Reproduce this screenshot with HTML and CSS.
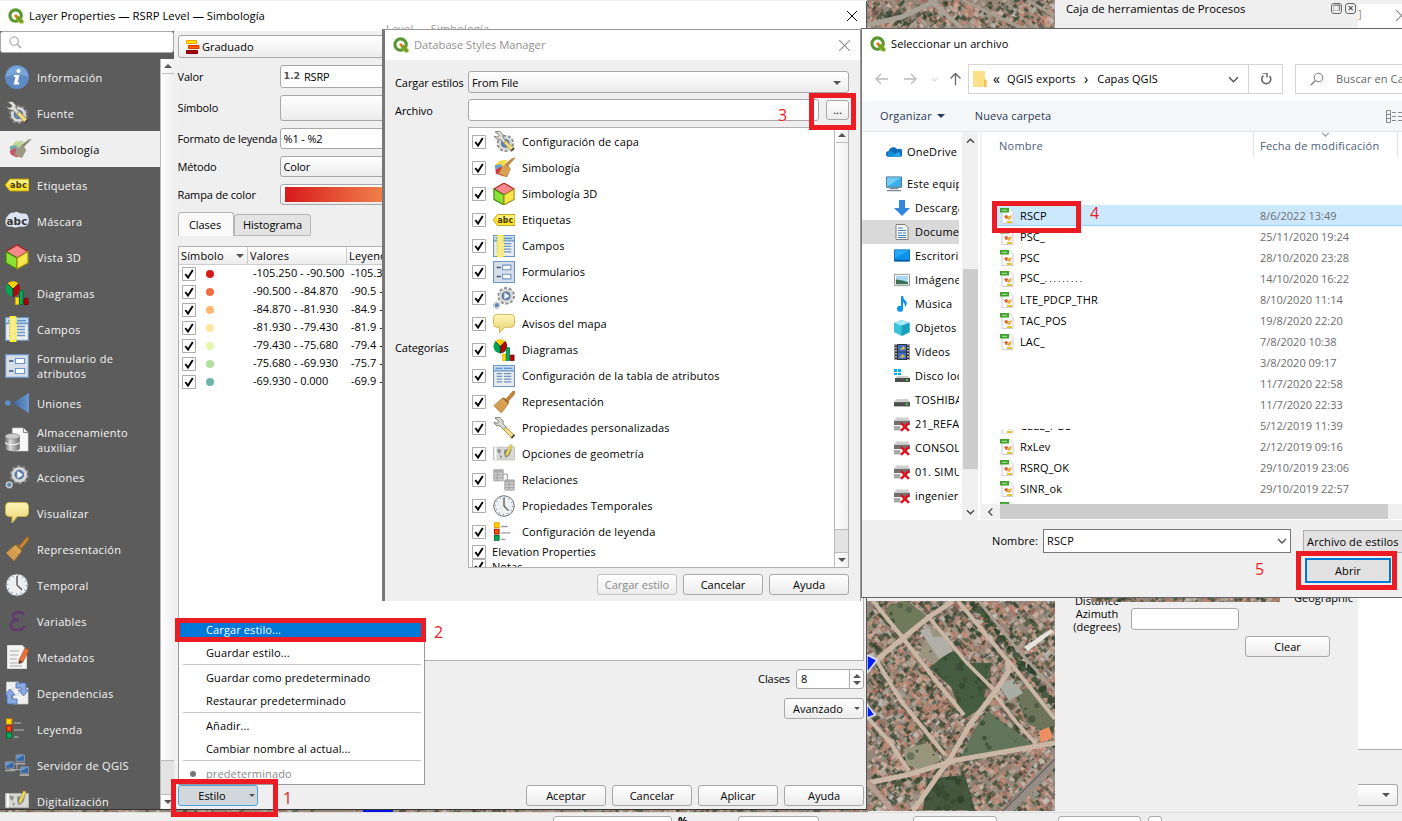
FILE: index.html
```html
<!DOCTYPE html>
<html lang="es">
<head>
<meta charset="utf-8">
<title>Layer Properties — RSRP Level — Simbología</title>
<link rel="stylesheet" href="styles.css">
</head>
<body>
<svg class="defs" width="0" height="0">
<defs>
<linearGradient id="g-blue" x1="0" y1="0" x2="1" y2="0"><stop offset="0" stop-color="#3a6096"/><stop offset="1" stop-color="#6b9ad0"/></linearGradient>
<linearGradient id="g-cyl" x1="0" y1="0" x2="1" y2="0"><stop offset="0" stop-color="#666"/><stop offset=".35" stop-color="#ddd"/><stop offset="1" stop-color="#6a6a6a"/></linearGradient>
<linearGradient id="g-yel" x1="0" y1="0" x2="0" y2="1"><stop offset="0" stop-color="#fff6b8"/><stop offset="1" stop-color="#e8d36e"/></linearGradient>
</defs>
<symbol id="qgis" viewBox="0 0 16 16"><circle cx="7.6" cy="7.6" r="5.7" fill="none" stroke="#589632" stroke-width="3.1"/><path d="M8 8l3.2 0 4.3 4.6v3h-3.3l-4.2-4.4z" fill="#93b023"/><path d="M8.6 8.4l5.8 6" stroke="#5f9a35" stroke-width="1.6"/><circle cx="8" cy="8" r="1.7" fill="#ee7913"/></symbol>
<symbol id="info" viewBox="0 0 24 24"><circle cx="12" cy="12" r="12" fill="#5b8ac4"/><path d="M1 12a11 11 0 0 1 22 0q-11-5-22 0" fill="#7ba4d8"/><circle cx="13.5" cy="6" r="2" fill="#fff"/><path d="M9 10h5.500l-2 7.500h2l-.5 2h-5.500l2-7.500H8.500z" fill="#fff"/></symbol>
<symbol id="gear" viewBox="0 0 20 20"><circle cx="10" cy="10" r="8.600" fill="none" stroke="#8a8a8a" stroke-width="2.600" stroke-dasharray="3.500 1.900"/><circle cx="10" cy="10" r="6.500" fill="#6f9bd1" stroke="#d6d6d6" stroke-width="3"/><circle cx="10" cy="10" r="4.300" fill="#5b8ac4" stroke="#555" stroke-width=".6"/></symbol>
<symbol id="wrench" viewBox="0 0 24 24"><path d="M2 1l5-.8 4 4v3.200l4 4.500-3 2.400L8 10 3.500 9 .8 6l4.200.8 1.800-1.800z" fill="#dcdcd4" stroke="#66685e" stroke-width=".9"/><path d="M11.500 13.500l3-2.500 8.500 8.500-2.800 3.200z" fill="#f1dc83" stroke="#9b8940" stroke-width=".9"/><path d="M20 23l3.500-3.500" stroke="#444" stroke-width="2"/></symbol>
<symbol id="source" viewBox="0 0 24 24"><use href="#gear" x="4" y="4" width="19" height="19"/><use href="#wrench" x="0" y="0" width="24" height="23"/></symbol>
<symbol id="symb" viewBox="0 0 24 24"><path d="M1 10l6-6 9-1-4 7z" fill="#f4dc42"/><path d="M2 9l7-1 3 6-9 2z" fill="#6f9bd1"/><path d="M3 14l6-3 4 9-2 1-8-3z" fill="#da3038"/><path d="M10 11l5-3 4 5-4 9-9-4z" fill="#d9a055" stroke="#a47433" stroke-width=".6"/><path d="M16 10L24 1l-3.500 1-7 6z" fill="#c88a3d" stroke="#9a6727" stroke-width=".6"/></symbol>
<symbol id="symbsel" viewBox="0 0 26 24"><path d="M1 12l7-8 9-1-4 7z" fill="#bdd894"/><path d="M2 9l7-1 3 6-9 2z" fill="#74a5aa"/><path d="M2 14l6-3 4 9-3 1-6-3z" fill="#c75465"/><path d="M10 11l6-3 4 5-5 9-8-4z" fill="#9b9b85"/><path d="M17 10L26 1l-4 1-8 6z" fill="#8e8c74"/></symbol>
<symbol id="brush" viewBox="0 0 24 24"><path d="M14 9l8-9h2l-1 4-7 8z" fill="#c98432" stroke="#925d1d" stroke-width=".6"/><path d="M1 16l9-8 3 0 4 4-1 3-7 9z" fill="#dba354" stroke="#9b6a2a" stroke-width=".7"/><path d="M3 16l7 6M5 14l6 6M7 12l6 6" stroke="#b57e36" stroke-width=".7"/><path d="M11 8l6 5" stroke="#8f6329" stroke-width="1.500"/></symbol>
<symbol id="label" viewBox="0 0 24 24"><path d="M0 12l5-6h19v12H5z" fill="#fbe12e" stroke="#b99d10" stroke-width=".9"/><path d="M5 7h18v4H3z" fill="#fff083"/><text x="5" y="15.200" class="abc" font-size="8.800" fill="#443c08" textLength="17" lengthAdjust="spacingAndGlyphs">abc</text></symbol>
<symbol id="mask" viewBox="0 0 26 24"><path d="M4 5q3-3 6-2 2-2 5 0l3 1q6-1 7 3 2 6-1 10-4 2-8 1-5 2-9 0-5 1-6-2-2-6 3-11z" fill="#dbe4f3"/><text x="1.500" y="16" class="abc" font-size="12" fill="#333" textLength="23" lengthAdjust="spacingAndGlyphs">abc</text></symbol>
<symbol id="cube" viewBox="0 0 24 24"><g stroke-linejoin="round" stroke-width="1.200"><path d="M12 0l11 6.500L12 13 1 6.500z" fill="#f5898b" stroke="#b01a1f"/><path d="M1 6.500L12 13v11L1 18z" fill="#8be234" stroke="#3d8411"/><path d="M23 6.500L12 13v11l11-6z" fill="#f7e64c" stroke="#a08f14"/></g></symbol>
<symbol id="diag" viewBox="0 0 24 24"><circle cx="8" cy="8" r="7.500" fill="#00a651"/><path d="M8 8L2.500 2.500a8 8 0 0 1 11 0z" fill="#fc0"/><path d="M8 8l5.500-5.500a8 8 0 0 1-5.500 13z" fill="#b00a0a"/><path d="M8 8v8M8 8L2.500 2.500M8 8l5.500-5.500" stroke="#222" stroke-width=".8"/><g stroke-width=".8"><path d="M10.500 16.500h3.500v7h-3.500z" fill="#fd0" stroke="#d9a400"/><path d="M14.500 9.500h3.500v14h-3.500z" fill="#00b050" stroke="#064"/><path d="M19 17.500h4v6h-4z" fill="#b00" stroke="#600"/></g></symbol>
<symbol id="table" viewBox="0 0 24 24"><path d="M.6.6h22.800v22.800H.6z" fill="#ececec" stroke="#6a96c8" stroke-width="1.200"/><path d="M1.500 1.500h21v5h-21z" fill="#b6d5f1"/><path d="M1 6.500h22M3 3.700h7M12 3.700h9M4 9.500h6M12 9.500h8M4 12.500h6M12 12.500h8M4 15.500h6M12 15.500h8M4 18.500h6M12 18.500h8" stroke="#6a96c8" stroke-width="1.400"/></symbol>
<symbol id="fields" viewBox="0 0 24 24"><use href="#table" width="24" height="24"/><path d="M5.500 0h5v24h-5z" fill="#f3e9a9" stroke="#fcf03c" stroke-width="1.800"/></symbol>
<symbol id="form" viewBox="0 0 24 24"><path d="M.6.6h22.800v22.800H.6z" fill="#d7dee8" stroke="#6a96c8" stroke-width="1.200"/><path d="M10.500 4.500h9v5h-9zM10.500 14.500h9v5h-9z" fill="#fff" stroke="#6a96c8" stroke-width="1.200"/><path d="M4 7h4.500M4 17h4.500" stroke="#45566e" stroke-width="1.600"/></symbol>
<symbol id="join" viewBox="0 0 26 24"><path d="M8 12L26 1v22z" fill="url(#g-blue)"/><circle cx="3" cy="12" r="3" fill="#5f8ec8"/></symbol>
<symbol id="aux" viewBox="0 0 26 26"><path d="M8 0h12l5 5v20H8z" fill="#f8f8f8" stroke="#ccc" stroke-width=".6"/><path d="M20 0v5h5" fill="none" stroke="#777"/><path d="M0 9v13q0 3 8 3t8-3V9z" fill="url(#g-cyl)"/><ellipse cx="8" cy="9" rx="8" ry="3" fill="#ccc" stroke="#777" stroke-width=".6"/><path d="M0 15.500q2 2.500 8 2.500t8-2.500" fill="none" stroke="#eee" stroke-width="1.300"/></symbol>
<symbol id="act" viewBox="0 0 26 26"><use href="#gear" x="5" y="0" width="21" height="21"/><path d="M13.500 6.500l6 4-6 4z" fill="#fff"/><use href="#gear" x="0" y="17" width="9" height="9"/></symbol>
<symbol id="tip" viewBox="0 0 24 24"><path d="M4 1.500h16q3.500 0 3.500 4v6q0 4-3.500 4h-7.500L7 22v-6.500H4q-3.500 0-3.500-4v-6q0-4 3.500-4z" fill="url(#g-yel)" stroke="#c9b251"/></symbol>
<symbol id="clock" viewBox="0 0 24 24"><circle cx="12" cy="12" r="11.200" fill="#eeeff1" stroke="#666" stroke-width="1"/><circle cx="12" cy="12" r="9.300" fill="none" stroke="#6f92bd" stroke-width="1.500" stroke-dasharray="1 3.870"/><path d="M12 3v9l5 5" fill="none" stroke="#555" stroke-width="1.400"/></symbol>
<symbol id="eps" viewBox="0 0 24 24"><path d="M18.500 6.500q-.5-3.500-5-3.500t-5.500 4q0 4 6 4-8 0-8 5t7 5q5.500 0 6.500-4" fill="none" stroke="#62396e" stroke-width="2.600"/></symbol>
<symbol id="meta" viewBox="0 0 24 24"><path d="M2.500.5h15l4 5v18h-19z" fill="#f3f3f3" stroke="#ddd"/><path d="M5 6h9M5 10h8M5 14h7M5 18h12M5 21h12" stroke="#c3c3c3" stroke-width="1.300"/><path d="M14 15l6-12 4 2-6 12-4 1.500z" fill="#e8703a" stroke="#b44b1b" stroke-width=".6"/><path d="M13.800 18.500l.4-3.500 3.500 2z" fill="#444"/></symbol>
<symbol id="dep" viewBox="0 0 24 24"><path d="M1.500 1h12v13h-12zM8 7h15v16H8z" fill="#f0f0f0" stroke="#ccc" stroke-width=".7"/><path d="M5 8l5 6H7v4h5v5H2v-9H-.2z" fill="#8aa9e0" stroke="#456db4" stroke-width=".8"/><path d="M11 2h10v7h2.500L18.500 15l-5-6h3V7h-5.500z" fill="#8aa9e0" stroke="#456db4" stroke-width=".8"/></symbol>
<symbol id="leg" viewBox="0 0 24 24"><g stroke-width="1.200"><path d="M1.600 2h5v5h-5z" fill="#ffe100" stroke="#f39c00"/><path d="M1.600 9h5v5h-5z" fill="#ff5a00" stroke="#b01500"/><path d="M1.600 16h5v5h-5z" fill="#00b45a" stroke="#067035"/></g><path d="M9 6h7M9 13h10M9 20h4.500" stroke="#9a9a9a" stroke-width="1.500"/></symbol>
<symbol id="srv" viewBox="0 0 26 24"><path d="M13 10v6M5 17h15" stroke="#bbb"/><g fill="#3465a4" stroke="#8f99a3"><path d="M12 1h9v7h-9zM.6 8.500h9v7h-9zM17 14h8.500v7H17z"/></g><path d="M11 10.500h11M0 18h11M16 23h10" stroke="#aaa" stroke-width="1.800"/><path d="M12.500 1.500h8l-8 4zM1 9h8l-8 4zM17.500 14.500h7.500l-7.500 4z" fill="#6f9bd1"/></symbol>
<symbol id="digi" viewBox="0 0 26 24"><path d="M.5 4h25v15H.5z" fill="#d8d8d6" stroke="#bbb"/><path d="M3 4v15" stroke="#fff" stroke-width="2"/><path d="M5 6l5 1-2 5-3-3zM13 7l9-1-2 7-5 4-2-5zM8 13l3 2-2 3z" fill="#8f918c"/><path d="M15 12L20 1l3 1-5 11-3 2z" fill="#f0df5b" stroke="#9b8b2b" stroke-width=".6"/></symbol>
<symbol id="rel" viewBox="0 0 26 26"><path d="M11 6h6v8" fill="none" stroke="#888"/><g fill="#ccc" stroke="#999"><path d="M1 1h11v13H1zM14 13h11v12H14z"/></g><path d="M1 2.500h11M14 14.500h11" stroke="#aaa" stroke-width="3"/><path d="M1 7h11M1 10.500h11M5 4v10M14 18.500h11M14 22h11M19 16v9" stroke="#888" stroke-width=".7"/></symbol>
<symbol id="grad" viewBox="0 0 14 14"><path d="M.5.500h10v3H.500z" fill="#ffe100" stroke="#f2a100"/><path d="M2.500 5.500h10.500v3H2.500z" fill="#ff5a00" stroke="#d33a00"/><path d="M.5 10.500h11v3H.500z" fill="#b30000" stroke="#700"/></symbol>
<symbol id="mag" viewBox="0 0 14 14"><circle cx="5.500" cy="5.500" r="4.500" fill="none" stroke="#8d8d8d"/><path d="M9 9l4 4" stroke="#8d8d8d" stroke-width="1.300"/></symbol>
<symbol id="mag2" viewBox="0 0 14 14"><circle cx="8.500" cy="5.500" r="4.300" fill="none" stroke="#777"/><path d="M5.500 8.500L1 13" stroke="#777" stroke-width="1.200"/></symbol>
<symbol id="x" viewBox="0 0 10 10"><path d="M0 0l10 10M10 0L0 10" stroke="currentColor" fill="none"/></symbol>
<symbol id="v" viewBox="0 0 10 6"><path d="M1 1l4 4 4-4" stroke="currentColor" stroke-width="1.400" fill="none"/></symbol>
<symbol id="arr" viewBox="0 0 13 12"><path d="M13 6H1M6 1L1 6l5 5" stroke="currentColor" stroke-width="1.300" fill="none"/></symbol>
<symbol id="reload" viewBox="0 0 12 12"><path d="M9.500 3A4.500 4.500 0 1 1 3.500 2.600" fill="none" stroke="#666" stroke-width="1.600"/><path d="M2.500 0h4.500v4.500" fill="none" stroke="#666" stroke-width="1.400"/></symbol>
<symbol id="folder" viewBox="0 0 14 16"><path d="M0 0h12v8l1.500 1.500V16H0z" fill="#ffe08a"/><path d="M12 8l1.500 1.500V16H11V9z" fill="#f0c350"/></symbol>
<symbol id="cloud" viewBox="0 0 17 12"><path d="M3 11a3 3 0 0 1 0-6A5 5 0 0 1 12 3a4 4 0 0 1 4 8z" fill="#0f6cbd"/><path d="M3 11a3.500 3.500 0 0 1 2-6l10 6z" fill="#1490df"/><path d="M6 11l7-5a4 4 0 0 1 2 5z" fill="#28a8ea"/></symbol>
<symbol id="pc" viewBox="0 0 17 16"><path d="M.5.500h16v11H.500z" fill="#3dafee" stroke="#4e6f86"/><path d="M1 1h15L1 11z" fill="#73cdf6"/><path d="M4 13h9M1 15h15" stroke="#7a8b96" stroke-width="1.300"/></symbol>
<symbol id="down" viewBox="0 0 16 16"><path d="M5 0h6v8h5l-8 8-8-8h5z" fill="#3187de"/></symbol>
<symbol id="doc" viewBox="0 0 14 16"><path d="M1 .5h9l3 3v12H1z" fill="#f8f8f8" stroke="#818181"/><path d="M3 4h5M3 6.500h8M3 9h4M8 9h3M3 11.500h8M3 13.500h8" stroke="#3d83bd" stroke-width="1.200"/></symbol>
<symbol id="desk" viewBox="0 0 17 14"><path d="M.5.500h16v12H.500z" fill="#0d94ea" stroke="#086ab2"/><path d="M1 11.500h15" stroke="#064f86"/><path d="M1 1h15L1 9z" fill="#28a8f5"/></symbol>
<symbol id="img" viewBox="0 0 17 13"><path d="M.5.500h16v12H.500z" fill="#fff" stroke="#929292"/><path d="M2 2h13v9H2z" fill="#a9d6f2"/><path d="M2 6q5 0 13 3v2H2z" fill="#3c7054"/></symbol>
<symbol id="mus" viewBox="0 0 12 16"><path d="M5 0h2q0 3 3 5 2 3-1 6 0-4-2-5v7a3 3 0 1 1-2-3z" fill="#0b93ec"/></symbol>
<symbol id="obj" viewBox="0 0 17 17"><path d="M0 3l8-3 8.500 3v10l-8 4L0 13z" fill="#3bc2d8"/><path d="M0 3l8-3 8.500 3L8 6z" fill="#a6e9f2"/><path d="M8 6l8.500-3v10L8 17z" fill="#1a9fbe"/></symbol>
<symbol id="vid" viewBox="0 0 15 16"><path d="M0 0h15v16H0z" fill="#333"/><path d="M1.500 0v16M13.500 0v16" stroke="#eee" stroke-width="1.300" stroke-dasharray="1.500 1.500"/><path d="M3.500 1h8v6.500h-8zM3.500 8.500h8V15h-8z" fill="#3b6fd0"/><path d="M5 6l4-4 2 3zM5 14l3-4 3 3z" fill="#e7b82d"/></symbol>
<symbol id="hdd" viewBox="0 0 15 14"><path d="M2 6h11l2 3H0z" fill="#cfcfcf"/><path d="M0 9h15v4H0z" fill="#4c4c4c"/><path d="M11 11h2" stroke="#4fe04f" stroke-width="1.500"/></symbol>
<symbol id="win" viewBox="0 0 16 14"><path d="M0 0h3v3H0zM4 0h3v3H4zM0 4h3v2H0zM4 4h3v2H4z" fill="#00adef"/><path d="M3 7h11l2 2H1z" fill="#cfcfcf"/><path d="M1 9h15v4H1z" fill="#4c4c4c"/><path d="M12 11h2" stroke="#4fe04f" stroke-width="1.500"/></symbol>
<symbol id="net" viewBox="0 0 15 14"><path d="M2 1h11l2 3H0z" fill="#cfcfcf"/><path d="M0 4h15v4H0z" fill="#707070"/><path d="M0 9h6v4H0z" fill="#a5a5a5"/><path d="M6.500 6l7.500 7.500M14 6l-7.500 7.500" stroke="#e0141e" stroke-width="2.400"/></symbol>
<symbol id="qml" viewBox="0 0 14 16"><path d="M2 .500h8l3 3v12H2z" fill="#fafafa" stroke="#cfcfcf"/><path d="M0 0h9v4.500H0z" fill="#3ea52b"/><path d="M2 2.300h5" stroke="#b9e0b0"/><path d="M4 8l3-1 2 3-3 1z" fill="#da5b3c"/><path d="M7 9l5-2-2 5-3-1z" fill="#e8af3e"/><path d="M7 13h5v2H7z" fill="#e0c52f"/></symbol>
<symbol id="tick" viewBox="0 0 14 14"><path d="M.5.500h13v13H.500z" fill="#fff" stroke="#adadad"/><path d="M3.300 7l2.700 3.500 4.800-7.500" fill="none" stroke="#000" stroke-width="1.900"/></symbol>
</svg>

<!-- QGIS main window behind the dialogs -->
<canvas class="map map-top" id="map-top" width="188" height="28"></canvas>
<canvas class="map map-bottom" id="map-bottom" width="188" height="210"></canvas>
<canvas class="map map-strip" id="map-strip" width="868" height="3"></canvas>
<canvas class="map map-hair" id="map-hair" width="189" height="10"></canvas>
<section class="dock-top"><span>Caja de herramientas de Procesos</span><i class="mini">❐</i><i class="mini">✕</i></section>
<div class="corner">] <svg width="11" height="11"><use href="#x"/></svg></div>
<section class="dock-bottom">
  <div class="az-row"><label>Distance<br>Azimuth<br>(degrees)</label><div class="input az"></div><span class="geo">Geographic</span></div>
  <div class="btn clear">Clear</div>
</section>
<section class="far">
  <div class="far-white"></div>
  <div class="far-combo"><i class="caret"></i></div>
</section>
<footer class="status"><i class="s1"></i><b>%</b><i class="s2"></i><i class="s3"></i><i class="s4"></i><i class="s5"></i></footer>

<!-- Layer properties -->
<main class="win props">
  <header class="title"><svg width="16" height="16"><use href="#qgis"/></svg><span>Layer Properties — RSRP Level — Simbología</span><svg class="close" width="10" height="10"><use href="#x"/></svg></header>
  <div class="props-body">
    <div class="side">
      <div class="search"><svg width="13" height="13"><use href="#mag"/></svg></div>
      <div class="side-main">
        <ul class="nav">
          <li><svg><use href="#info"/></svg>Información</li>
          <li><svg><use href="#source"/></svg>Fuente</li>
          <li class="sel"><svg><use href="#symbsel"/></svg>Simbología</li>
          <li><svg><use href="#label"/></svg>Etiquetas</li>
          <li><svg><use href="#mask"/></svg>Máscara</li>
          <li><svg><use href="#cube"/></svg>Vista 3D</li>
          <li><svg><use href="#diag"/></svg>Diagramas</li>
          <li><svg><use href="#fields"/></svg>Campos</li>
          <li class="two"><svg><use href="#form"/></svg><span>Formulario de<br>atributos</span></li>
          <li><svg><use href="#join"/></svg>Uniones</li>
          <li class="two"><svg><use href="#aux"/></svg><span>Almacenamiento<br>auxiliar</span></li>
          <li><svg><use href="#act"/></svg>Acciones</li>
          <li><svg><use href="#tip"/></svg>Visualizar</li>
          <li><svg><use href="#brush"/></svg>Representación</li>
          <li><svg><use href="#clock"/></svg>Temporal</li>
          <li><svg><use href="#eps"/></svg>Variables</li>
          <li><svg><use href="#meta"/></svg>Metadatos</li>
          <li><svg><use href="#dep"/></svg>Dependencias</li>
          <li><svg><use href="#leg"/></svg>Leyenda</li>
          <li><svg><use href="#srv"/></svg>Servidor de QGIS</li>
          <li><svg><use href="#digi"/></svg>Digitalización</li>
        </ul>
        <div class="vbar"><i class="up"></i><b></b><i class="dn"></i></div>
      </div>
    </div>
    <div class="grip"></div>
    <div class="content">
      <div class="combo graduado"><svg width="14" height="14"><use href="#grad"/></svg>Graduado</div>
      <div class="frow r1"><span>Valor</span><div class="input"><b>1.2</b>RSRP</div></div>
      <div class="frow r2"><span>Símbolo</span><div class="combo"></div></div>
      <div class="frow r3"><span>Formato de leyenda</span><div class="input">%1 - %2</div></div>
      <div class="frow r4"><span>Método</span><div class="combo">Color</div></div>
      <div class="frow r5"><span>Rampa de color</span><div class="combo"><i class="ramp"></i></div></div>
      <div class="tabs"><div class="tab on">Clases</div><div class="tab">Histograma</div></div>
      <div class="classes">
        <div class="crow head"><span>Símbolo<i class="caret"></i></span><span>Valores</span><span>Leyenda</span></div>
        <div class="crow"><span><svg><use href="#tick"/></svg><i class="dot d1"></i></span><span>-105.250 - -90.500</span><span>-105.3 - -90.5</span></div>
        <div class="crow"><span><svg><use href="#tick"/></svg><i class="dot d2"></i></span><span>-90.500 - -84.870</span><span>-90.5 - -84.9</span></div>
        <div class="crow"><span><svg><use href="#tick"/></svg><i class="dot d3"></i></span><span>-84.870 - -81.930</span><span>-84.9 - -81.9</span></div>
        <div class="crow"><span><svg><use href="#tick"/></svg><i class="dot d4"></i></span><span>-81.930 - -79.430</span><span>-81.9 - -79.4</span></div>
        <div class="crow"><span><svg><use href="#tick"/></svg><i class="dot d5"></i></span><span>-79.430 - -75.680</span><span>-79.4 - -75.7</span></div>
        <div class="crow"><span><svg><use href="#tick"/></svg><i class="dot d6"></i></span><span>-75.680 - -69.930</span><span>-75.7 - -69.9</span></div>
        <div class="crow"><span><svg><use href="#tick"/></svg><i class="dot d7"></i></span><span>-69.930 - 0.000</span><span>-69.9 - 0.0</span></div>
      </div>
      <div class="classn"><span>Clases</span><div class="input spin">8<span><i class="tu"></i><i class="caret"></i></span></div></div>
      <div class="adv"><div class="btn">Avanzado<i class="caret"></i></div></div>
      <div class="buttons"><div class="btn estilo">Estilo<i class="caret"></i></div><div class="btn first">Aceptar</div><div class="btn">Cancelar</div><div class="btn">Aplicar</div><div class="btn">Ayuda</div></div>
    </div>
  </div>
</main>

<div class="ghost">Level — Simbología</div>

<!-- Database styles manager -->
<section class="win dbm">
  <header class="title"><svg width="16" height="16"><use href="#qgis"/></svg><span>Database Styles Manager</span><svg class="close" width="11" height="11"><use href="#x"/></svg></header>
  <div class="dbm-grid">
    <span>Cargar estilos</span><div class="combo">From File<i class="caret"></i></div>
    <span>Archivo</span><div class="file"><div class="input"></div><div class="btn">...</div></div>
    <span class="cat">Categorías</span>
    <div class="catbox">
      <ul class="cats">
        <li><svg class="t"><use href="#tick"/></svg><svg><use href="#source"/></svg>Configuración de capa</li>
        <li><svg class="t"><use href="#tick"/></svg><svg><use href="#symb"/></svg>Simbología</li>
        <li><svg class="t"><use href="#tick"/></svg><svg><use href="#cube"/></svg>Simbología 3D</li>
        <li><svg class="t"><use href="#tick"/></svg><svg><use href="#label"/></svg>Etiquetas</li>
        <li><svg class="t"><use href="#tick"/></svg><svg><use href="#fields"/></svg>Campos</li>
        <li><svg class="t"><use href="#tick"/></svg><svg><use href="#form"/></svg>Formularios</li>
        <li><svg class="t"><use href="#tick"/></svg><svg><use href="#act"/></svg>Acciones</li>
        <li><svg class="t"><use href="#tick"/></svg><svg><use href="#tip"/></svg>Avisos del mapa</li>
        <li><svg class="t"><use href="#tick"/></svg><svg><use href="#diag"/></svg>Diagramas</li>
        <li><svg class="t"><use href="#tick"/></svg><svg><use href="#table"/></svg>Configuración de la tabla de atributos</li>
        <li><svg class="t"><use href="#tick"/></svg><svg><use href="#brush"/></svg>Representación</li>
        <li><svg class="t"><use href="#tick"/></svg><svg><use href="#wrench"/></svg>Propiedades personalizadas</li>
        <li><svg class="t"><use href="#tick"/></svg><svg><use href="#digi"/></svg>Opciones de geometría</li>
        <li><svg class="t"><use href="#tick"/></svg><svg><use href="#rel"/></svg>Relaciones</li>
        <li><svg class="t"><use href="#tick"/></svg><svg><use href="#clock"/></svg>Propiedades Temporales</li>
        <li><svg class="t"><use href="#tick"/></svg><svg><use href="#leg"/></svg>Configuración de leyenda</li>
        <li class="short"><svg class="t"><use href="#tick"/></svg>Elevation Properties</li>
        <li class="short"><svg class="t"><use href="#tick"/></svg>Notas</li>
      </ul>
      <div class="vbar"><i class="up"></i><b></b><i class="dn"></i></div>
    </div>
  </div>
  <div class="dbm-buttons"><div class="btn off">Cargar estilo</div><div class="btn">Cancelar</div><div class="btn">Ayuda</div></div>
</section>

<!-- File chooser -->
<section class="win fd">
  <header class="title"><svg width="16" height="16"><use href="#qgis"/></svg><span>Seleccionar un archivo</span></header>
  <div class="addr">
    <svg class="a1" width="13" height="12"><use href="#arr"/></svg><svg class="a2" width="13" height="12"><use href="#arr"/></svg><svg class="a3" width="7" height="5"><use href="#v"/></svg><svg class="a4" width="13" height="12"><use href="#arr"/></svg>
    <div class="path"><svg width="14" height="16"><use href="#folder"/></svg><span class="p1">«</span><span class="p2">QGIS exports</span><span class="p3">›</span><span class="p4">Capas QGIS</span><svg class="pv" width="11" height="7"><use href="#v"/></svg><div class="re"><svg width="12" height="12"><use href="#reload"/></svg></div></div>
    <div class="find"><svg width="14" height="14"><use href="#mag2"/></svg><span>Buscar en Capas QGIS</span></div>
  </div>
  <div class="tools"><span>Organizar</span><i class="caret"></i><span class="nc">Nueva carpeta</span><svg class="view" width="16" height="13" viewBox="0 0 16 13"><path d="M.5.500h4v12h-4zM.5 4.500h4M.5 8.500h4M6 2.500h4M12 2.500h4M6 6.500h4M12 6.500h4M6 10.500h4M12 10.500h4" fill="none" stroke="#888"/></svg></div>
  <div class="fd-mid">
    <ul class="tree">
      <li class="l0 od"><svg><use href="#cloud"/></svg>OneDrive</li>
      <li class="l0"><svg><use href="#pc"/></svg>Este equipo</li>
      <li><svg><use href="#down"/></svg>Descargas</li>
      <li class="cur"><svg><use href="#doc"/></svg>Documentos</li>
      <li><svg><use href="#desk"/></svg>Escritorio</li>
      <li><svg><use href="#img"/></svg>Imágenes</li>
      <li><svg><use href="#mus"/></svg>Música</li>
      <li><svg><use href="#obj"/></svg>Objetos 3D</li>
      <li><svg><use href="#vid"/></svg>Vídeos</li>
      <li><svg><use href="#win"/></svg>Disco local</li>
      <li><svg><use href="#hdd"/></svg>TOSHIBA</li>
      <li><svg><use href="#net"/></svg>21_REFARM</li>
      <li><svg><use href="#net"/></svg>CONSOLA</li>
      <li><svg><use href="#net"/></svg>01. SIMU</li>
      <li><svg><use href="#net"/></svg>ingenieria</li>
    </ul>
    <div class="wbar"><svg class="wu" width="9" height="6"><use href="#v"/></svg><b></b><svg class="wd" width="9" height="6"><use href="#v"/></svg></div>
    <div class="files">
      <div class="fhead"><span>Nombre</span><span class="fm"><svg width="9" height="5"><use href="#v"/></svg>Fecha de modificación</span><span></span></div>
      <div class="frows">
        <div class="frw on"><svg><use href="#qml"/></svg><span>RSCP</span><time>8/6/2022 13:49</time></div>
        <div class="frw"><svg><use href="#qml"/></svg><span>PSC_</span><time>25/11/2020 19:24</time></div>
        <div class="frw"><svg><use href="#qml"/></svg><span>PSC</span><time>28/10/2020 23:28</time></div>
        <div class="frw"><svg><use href="#qml"/></svg><span>PSC_<em>.........</em></span><time>14/10/2020 16:22</time></div>
        <div class="frw"><svg><use href="#qml"/></svg><span>LTE_PDCP_THR</span><time>8/10/2020 11:14</time></div>
        <div class="frw"><svg><use href="#qml"/></svg><span>TAC_POS</span><time>19/8/2020 22:20</time></div>
        <div class="frw"><svg><use href="#qml"/></svg><span>LAC_</span><time>7/8/2020 10:38</time></div>
        <div class="frw"><svg></svg><span></span><time>3/8/2020 09:17</time></div>
        <div class="frw"><svg></svg><span></span><time>11/7/2020 22:58</time></div>
        <div class="frw"><svg></svg><span></span><time>11/7/2020 22:33</time></div>
        <div class="frw cut"><svg><use href="#qml"/></svg><span>CELL_POS</span><time>5/12/2019 11:39</time></div>
        <div class="frw"><svg><use href="#qml"/></svg><span>RxLev</span><time>2/12/2019 09:16</time></div>
        <div class="frw"><svg><use href="#qml"/></svg><span>RSRQ_OK</span><time>29/10/2019 23:06</time></div>
        <div class="frw"><svg><use href="#qml"/></svg><span>SINR_ok</span><time>29/10/2019 22:57</time></div>
        <div class="frw"><svg><use href="#qml"/></svg></div>
      </div>
      <div class="hbar"><svg width="9" height="6"><use href="#v"/></svg><b></b></div>
    </div>
  </div>
  <div class="fname"><span>Nombre:</span><div class="fin">RSCP<svg width="10" height="6"><use href="#v"/></svg></div><div class="ftype">Archivo de estilos</div></div>
  <div class="open">Abrir</div>
</section>

<!-- Style menu -->
<div class="menu">
  <div class="mi hot">Cargar estilo...</div>
  <div class="mi">Guardar estilo...</div><hr>
  <div class="mi">Guardar como predeterminado</div>
  <div class="mi">Restaurar predeterminado</div><hr>
  <div class="mi">Añadir...</div>
  <div class="mi">Cambiar nombre al actual...</div><hr>
  <div class="mi dis">predeterminado</div>
</div>

<!-- Step markers -->
<div class="box b1"></div><div class="num n1">1</div>
<div class="box b2"></div><div class="num n2">2</div>
<div class="box b3"></div><div class="num n3">3</div>
<div class="box b4"></div><div class="num n4">4</div>
<div class="box b5"></div><div class="num n5">5</div>
<script src="map.js"></script>
</body>
</html>
```

FILE: styles.css
```css
* { box-sizing: border-box; }
body { margin: 0; width: 1402px; height: 821px; overflow: hidden; position: relative; background: #efefef; font: 11px/14px "Open Sans", "Noto Sans", sans-serif; color: #000; white-space: nowrap; }
ul { list-style: none; margin: 0; padding: 0; }
svg { display: block; flex: none; }
i { font-style: normal; }
.defs { position: absolute; }
.abc { font-family: "DejaVu Sans", sans-serif; font-weight: bold; }
.win, .map, .dock-top, .corner, .dock-bottom, .far, .status, .ghost, .menu, .box, .num { position: absolute; }

.input, .combo, .btn { border: 1px solid #a8a8a8; border-radius: 3px; display: flex; align-items: center; }
.input { background: #fff; }
.combo, .btn { background: linear-gradient(#fff, #ececec); }
.btn { justify-content: center; height: 21px; width: 80px; }
.caret { width: 0; height: 0; border: 4px solid transparent; border-top: 4px solid #555; border-bottom: 0; }
.tu { width: 0; height: 0; border: 4px solid transparent; border-bottom: 4px solid #555; border-top: 0; }

/* background window */
.map-top { left: 867px; top: 0; }
.map-bottom { left: 867px; top: 601px; }
.map-strip { left: 0; top: 809px; }
.map-hair { left: 1091px; top: 592px; z-index: 1; }
.dock-top { left: 1055px; top: 0; width: 303px; height: 28px; background: #efefef; padding: 2px 2px 0 11px; display: flex; gap: 3px; font-size: 11.300px; }
.dock-top span { flex: 1; }
.mini { width: 11px; height: 11px; border: 1px solid #666; border-radius: 3px; font: 8px/9px "DejaVu Sans", sans-serif; text-align: center; margin-top: 1px; color: #333; }
.corner { left: 1358px; top: 4px; width: 44px; height: 24px; background: #fff; color: #888; display: flex; justify-content: space-between; padding-top: 3px; }
.corner svg { margin: 3px -5px 0 0; }
.dock-bottom { left: 1056px; top: 590px; width: 302px; height: 220px; }
.az-row { display: flex; padding-left: 17px; }
.az-row label { width: 48px; text-align: center; line-height: 13px; margin-top: 4px; }
.az { width: 108px; height: 22px; margin: 18px 0 0 10px; }
.geo { margin: 1px 0 0 55px; }
.clear { width: 85px; margin: 3px 0 0 189px; }
.far { left: 1358px; top: 597px; width: 44px; height: 213px; }
.far-white { background: #fff; height: 153px; border-bottom: 1px solid #aaa; }
.far-combo { width: 40px; height: 22px; margin-top: 34px; border: 1px solid #a8a8a8; border-left: 0; border-radius: 0 3px 3px 0; background: linear-gradient(#fff, #ececec); display: flex; align-items: center; justify-content: flex-end; padding-right: 7px; }
.status { left: 0; top: 812px; width: 1402px; height: 9px; background: #efefef; display: flex; padding: 3px 0 0 553px; overflow: hidden; border-top: 1px solid #ddd; }
.status i { background: #fff; border: 1px solid #aaa; border-radius: 3px 3px 0 0; height: 12px; }
.status b { width: 66px; padding-left: 6px; line-height: 10px; }
.s1 { width: 119px; } .s2 { width: 81px; } .s3 { width: 84px; margin-left: 94px; } .s4 { width: 83px; margin-left: 61px; } .s5 { width: 14px; margin-left: 7px; }

/* layer properties */
.props { left: 0; top: 1px; width: 867px; height: 809px; background: #efefef; border-right: 1px solid #555; border-bottom: 1px solid #333; }
.title { background: #fff; display: flex; align-items: center; }
.props .title { height: 30px; padding-left: 8px; font-size: 11.300px; }
.title span { margin-left: 5px; flex: 1; }
.props .close { margin-right: 9px; }
.props-body { display: flex; height: 778px; }
.side { width: 174px; background: #5c5c5c; display: flex; flex-direction: column; flex: none; }
.search { height: 22px; background: #fff; border: 1px solid #aaa; border-radius: 3px; display: flex; align-items: center; padding-left: 8px; }
.side-main { margin-top: 6px; display: flex; height: 750px; overflow: hidden; }
.nav { width: 160px; flex: none; }
.nav li { height: 36px; display: flex; align-items: center; padding-left: 5px; color: #f6f6f6; font-size: 11px; letter-spacing: .3px; line-height: 15px; }
.nav svg { width: 24px; height: 26px; margin-right: 8px; }
.nav .two { height: 38px; }
.nav .sel { background: #efefef; color: #000; padding-left: 8px; }
.vbar { width: 14px; background: linear-gradient(90deg, #fff, #efefef); border-left: 1px solid #bbb; display: flex; flex-direction: column; align-items: center; justify-content: space-between; }
.vbar .up, .vbar .dn { width: 0; height: 0; border: 4px solid transparent; }
.vbar .up { border-bottom-color: #555; border-top: 0; margin-top: 5px; }
.vbar .dn { border-top-color: #555; border-bottom: 0; margin-bottom: 5px; }
.vbar b { width: 100%; background: #e3e3e3; border: 1px solid #bbb; border-width: 1px 0; height: 35px; margin-top: auto; }
.side .vbar b { margin-bottom: 5px; }
.vbar .up::after { content: ""; display: block; width: 13px; height: 1px; background: #bbb; margin: 9px 0 0 -6px; }
.grip { width: 4px; flex: none; background: #f0f0f0; }
.content { width: 686px; flex: none; display: flex; flex-direction: column; }
.graduado { height: 23px; margin-top: 4px; padding-left: 7px; gap: 2px; flex: none; }
.frow { display: flex; align-items: center; flex: none; letter-spacing: -.15px; }
.frow > span { width: 102px; margin-left: -.5px; }
.frow > div { flex: 1; height: 100%; padding-left: 3px; }
.frow b { color: #555; font: bold 9.500px "DejaVu Sans", sans-serif; margin-right: 4px; margin-top: -2px; }
.r1 { height: 23px; margin-top: 7px; } .r2 { height: 26px; margin-top: 7px; } .r3 { height: 21px; margin-top: 7px; } .r4 { height: 21px; margin-top: 7px; } .r5 { height: 21px; margin-top: 7px; }
.ramp { height: 15px; width: 570px; margin-left: 1px; background: linear-gradient(90deg, #d7191c, #f0804a 98px, #fdae61 160px, #ffffbf); }
.tabs { display: flex; align-items: flex-end; margin-top: 7px; height: 24px; flex: none; }
.tab { border: 1px solid #b5b5b5; background: #e4e4e4; height: 22px; width: 77px; display: flex; align-items: center; justify-content: center; border-radius: 3px 3px 0 0; letter-spacing: -.05px; }
.tab.on { background: #fafafa; width: 56px; height: 24px; border-bottom: 0; padding-right: 2px; }
.classes { margin-top: 10px; height: 415px; flex: none; background: #fff; border: 1px solid #b0b0b0; }
.crow { height: 18px; display: grid; grid-template-columns: 69px 99px 1fr; align-items: center; margin-top: 0; }
.crow > span { padding-left: 3px; display: flex; align-items: center; margin-top: -2px; }
.crow > span:nth-child(2) { padding-left: 5px; }
.crow svg { width: 14px; height: 14px; margin-top: 2px; }
.crow.head > span { background: linear-gradient(#fff, #ececec); border: 1px solid #ccc; border-width: 0 1px 1px 0; height: 18px; padding-left: 2px; letter-spacing: .15px; margin: 0; }
.head .caret { margin-left: 12px; }
.crow:not(.head) > span:nth-child(3) { padding-left: 4px; }
.dot { width: 8px; height: 8px; border-radius: 50%; margin: 2px 0 0 10px; }
.d1 { background: #d7191c; } .d2 { background: #ee6e43; } .d3 { background: #feb871; } .d4 { background: #fee6a0; } .d5 { background: #e6f5b0; } .d6 { background: #b2dfa0; } .d7 { background: #6fb5a9; }
.classn { display: flex; justify-content: flex-end; gap: 6px; margin-top: 8px; align-items: center; height: 20px; letter-spacing: -.1px; }
.spin { width: 68px; height: 20px; padding-left: 4px; justify-content: space-between; }
.spin span { border-left: 1px solid #aaa; height: 18px; width: 14px; display: flex; flex-direction: column; align-items: center; justify-content: center; gap: 3px; }
.adv { display: flex; justify-content: flex-end; margin-top: 9px; }
.adv .caret { margin-left: 11px; margin-right: -5px; border-width: 3px; border-bottom: 0; }
.buttons { display: flex; gap: 6px; margin-top: 66px; }
.buttons .first { margin-left: auto; }
.estilo { background: #d2d7dc; border-color: #4aa3e0; }
.estilo .caret { margin-left: 23px; margin-right: -17px; border-width: 3px; border-bottom: 0; }
.ghost { left: 386px; top: 22px; width: 130px; height: 8px; overflow: hidden; color: #999; line-height: 14px; letter-spacing: .2px; }

/* database styles manager */
.dbm { left: 382px; top: 29px; width: 479px; height: 572px; background: #efefef; border-left: 3px solid #777; border-top: 1px solid #999; border-right: 1px solid #999; }
.dbm .title { height: 30px; padding-left: 8px; color: #919191; font-size: 11.200px; }
.dbm .close { margin-right: 10px; }
.dbm-grid { display: grid; grid-template-columns: 73px 381px; grid-template-rows: 22px 22px 441px; row-gap: 6px; padding: 11px 0 0 10px; align-items: center; }
.dbm-grid > span { padding-top: 2px; letter-spacing: -.08px; }
.dbm-grid > span.cat { padding-top: 0; }
.dbm-grid > .combo { height: 22px; padding: 1px 7px 0 3px; justify-content: space-between; letter-spacing: -.1px; }
.file { display: flex; gap: 7px; align-items: center; }
.file .input { width: 351px; height: 22px; }
.file .btn { width: 23px; height: 20px; }
.catbox { height: 441px; border: 1px solid #b0b0b0; background: #fff; display: flex; overflow: hidden; }
.cats { flex: 1; padding-top: 1px; letter-spacing: .13px; }
.cats li { height: 26px; display: flex; align-items: center; padding-left: 3px; }
.cats svg { width: 22px; height: 22px; margin: -1px 7px 0 0; }
.cats .t { width: 14px; height: 14px; margin-right: 7px; }
.cats .short { height: 14.500px; letter-spacing: .05px; }
.cats .short .t { margin-right: 6px; }
.dbm .vbar b { height: 24px; margin-bottom: 5px; }
.dbm-buttons { display: flex; gap: 6px; margin: 6px 11px 0 0; justify-content: flex-end; }
.off { color: #888; border-color: #c2c2c2; }

/* file chooser */
.fd { left: 861px; top: 28px; width: 541px; height: 570px; background: #efefef; border-left: 1px solid #777; border-top: 1px solid #666; border-bottom: 1px solid #666; overflow: hidden; z-index: 2; letter-spacing: .1px; }
.fd .title { height: 30px; padding-left: 8px; }
.addr { background: #fff; height: 42px; display: flex; align-items: center; color: #666; padding-bottom: 2px; }
.addr .a1 { margin-left: 13px; color: #bbb; } .addr .a2 { margin-left: 16px; transform: scaleX(-1); color: #bbb; } .addr .a3 { margin-left: 14px; color: #bbb; } .addr .a4 { margin-left: 11px; transform: rotate(90deg); }
.path { margin-left: 6px; width: 315px; flex: none; height: 30px; border: 1px solid #d5d5d5; display: flex; align-items: center; padding-left: 4px; color: #000; }
.p1 { margin-left: 6px; font-size: 14px; } .p2 { margin-left: 7px; width: 77px; } .p3 { font-size: 14px; } .p4 { margin-left: 9px; }
.pv { margin-left: auto; color: #555; }
.re { border-left: 1px solid #d5d5d5; height: 28px; width: 34px; margin-left: 9px; display: flex; align-items: center; justify-content: center; }
.find { margin-left: 12px; width: 180px; flex: none; height: 30px; border: 1px solid #d5d5d5; display: flex; align-items: center; gap: 12px; padding-left: 14px; }
.tools { height: 31px; background: #f5f6f7; border-bottom: 1px solid #e4e5e7; display: flex; align-items: center; padding-left: 18px; color: #1e395b; letter-spacing: .15px; }
.tools .caret { margin-left: 5px; border-top-color: #1e395b; }
.nc { margin-left: 30px; }
.view { margin-left: auto; }
.fd-mid { display: flex; height: 388px; background: #fff; }
.tree { width: 99px; overflow: hidden; border-right: 2px solid #fff; flex: none; letter-spacing: .2px; }
.tree li { height: 24px; display: flex; align-items: center; padding-left: 32px; }
.tree svg { width: 16px; height: 16px; margin-right: 5px; }
.tree .l0 { padding-left: 24px; }
.tree .od { height: 24px; margin: 8px 0 8px; }
.tree .cur { background: #d9d9d9; }
.wbar { width: 16px; margin-left: 1px; flex: none; background: #f0f0f0; display: flex; flex-direction: column; align-items: center; color: #444; }
.wu { transform: scaleY(-1); margin-top: 6px; }
.wbar b { background: #cdcdcd; width: 15px; height: 200px; margin-top: 125px; }
.wd { margin: auto 0 5px; }
.files { border-left: 2px solid #f2f2f2; margin-left: 2px; flex: 1; display: flex; flex-direction: column; overflow: hidden; }
.fhead { display: flex; height: 25px; color: #4c607a; padding-left: 17px; letter-spacing: .25px; align-items: center; flex: none; }
.fhead > span:first-child { width: 254px; padding-top: 2px; }
.fm { border: 1px solid #e2e2e2; border-width: 0 1px; width: 145px; height: 25px; padding: 7px 0 0 6px; position: relative; }
.fm svg { position: absolute; left: 67px; top: 0; color: #999; }
.frows { margin: 48px 0 0 11px; height: 299px; overflow: hidden; flex: none; }
.frw { height: 21px; display: flex; align-items: center; padding-left: 7px; }
.frw svg { width: 14px; height: 16px; margin-right: 6px; }
.frw span { width: 240px; }
.frw time { color: #6d6d6d; letter-spacing: -.02px; }
.frw em { font-style: normal; font-size: 9px; letter-spacing: 2px; }
.on.frw { background: #cce8ff; box-shadow: inset 0 -1px #99d1ff; padding-top: 1px; }
.cut svg, .cut span { clip-path: inset(74% 0 0 0); }
.hbar { background: #f0f0f0; height: 15px; display: flex; align-items: center; color: #444; flex: none; }
.hbar svg { transform: rotate(90deg); margin: 0 5px 0 4px; }
.hbar b { background: #cdcdcd; width: 388px; height: 15px; }
.fname { display: flex; align-items: center; margin-top: 9px; padding-left: 130px; height: 24px; }
.fin { margin-left: 5px; width: 248px; flex: none; height: 24px; border: 1px solid #777; background: #fff; display: flex; align-items: center; justify-content: space-between; padding: 0 3px; }
.fin svg { color: #555; }
.ftype { margin-left: 12px; width: 130px; height: 23px; border: 1px solid #adadad; background: #e1e1e1; padding: 4px 3px; flex: none; }
.open { width: 86px; height: 25px; margin: 5px 0 0 443px; border: 2px solid #0078d7; background: #e1e1e1; display: flex; align-items: center; justify-content: center; }

/* style menu */
.menu { left: 178px; top: 619px; width: 247px; height: 166px; background: #fff; border: 1px solid #999; padding: 0 3px 0 1px; overflow: hidden; letter-spacing: .12px; }
.mi { height: 23px; padding-left: 26px; display: flex; align-items: center; }
.mi.hot { margin: 3px 0 3px; height: 15px; background: #0078d7; color: #fff; padding-bottom: 2px; }
.menu hr { margin: 0 0 0 3px; border: 0; height: 2px; background: linear-gradient(#c9c9c9 50%, #fff 50%); }
.mi.dis { color: #8a8a8a; height: 24px; padding-left: 10px; }
.mi.dis::before { content: ""; width: 6px; height: 6px; border-radius: 50%; background: #777; margin-right: 10px; }

/* step markers */
.box { border: 5px solid #ed1c24; z-index: 3; }
.num { color: #ed1c24; font-size: 16px; line-height: 18px; z-index: 3; }
.b1 { left: 171px; top: 779px; width: 107px; height: 38px; } .n1 { left: 283px; top: 789px; }
.b2 { left: 175px; top: 618px; width: 251px; height: 24px; } .n2 { left: 434px; top: 623px; }
.b3 { left: 809px; top: 93px; width: 47px; height: 37px; } .n3 { left: 778px; top: 106px; }
.b4 { left: 992px; top: 201px; width: 89px; height: 32px; } .n4 { left: 1090px; top: 204px; }
.b5 { left: 1296px; top: 551px; width: 101px; height: 39px; } .n5 { left: 1255px; top: 560px; }
```

FILE: map.js
```js
// Procedural aerial view: roofs, trees, streets and parks.
let seed = 7;
const rnd = () => (seed = (seed * 16807) % 2147483647) / 2147483647;
const pick = a => a[Math.floor(rnd() * a.length)];
const roofs = ['#c4907e', '#b07a68', '#cfa896', '#9c6658', '#b8a594', '#8d7a6c', '#b0aca6', '#a39686', '#d2b3a4', '#c9c6c2', '#b98a76', '#9b9a8e', '#c28570'];
const greens = ['#34482f', '#2b3f2a', '#48593a', '#4a5a42', '#3c4a3a'];

function texture(c, w, h) {
  c.fillStyle = '#94877a';
  c.fillRect(0, 0, w, h);
  for (let i = 0; i < w * h / 8; i++) {
    c.save();
    c.translate(rnd() * w, rnd() * h);
    c.rotate(-0.75 + (rnd() < .5 ? 1.57 : 0));
    c.globalAlpha = .75;
    const k = rnd();
    c.fillStyle = k < .25 ? pick(greens) : k < .33 ? '#5e5148' : pick(roofs);
    c.fillRect(0, 0, 2 + rnd() * 5, 2 + rnd() * 3);
    c.restore();
  }
}
function line(c, pts, width, color) {
  c.beginPath();
  pts.forEach((p, i) => i ? c.lineTo(...p) : c.moveTo(...p));
  c.lineWidth = width;
  c.strokeStyle = color;
  c.stroke();
}
function park(c, pts, color, trees) {
  c.save();
  c.beginPath();
  pts.forEach((p, i) => i ? c.lineTo(...p) : c.moveTo(...p));
  c.closePath();
  c.fillStyle = color;
  c.fill();
  c.clip();
  const xs = pts.map(p => p[0]), ys = pts.map(p => p[1]);
  const x0 = Math.min(...xs), x1 = Math.max(...xs), y0 = Math.min(...ys), y1 = Math.max(...ys);
  for (let i = 0; i < trees; i++) {
    c.fillStyle = pick(greens);
    c.globalAlpha = .6;
    c.beginPath();
    c.arc(x0 + rnd() * (x1 - x0), y0 + rnd() * (y1 - y0), 1 + rnd() * 3, 0, 7);
    c.fill();
  }
  c.restore();
}
for (const id of ['map-top', 'map-strip', 'map-hair', 'map-bottom']) {
  const el = document.getElementById(id);
  texture(el.getContext('2d'), el.width, el.height);
}
const top_ = document.getElementById('map-top').getContext('2d');
line(top_, [[0, 25], [35, 17], [70, 0]], 5, '#a8a296');
line(top_, [[62, 0], [95, 28]], 4, '#aaa297');
line(top_, [[95, 0], [155, 28]], 3, '#a59b8e');
line(top_, [[160, 0], [188, 16]], 3, '#a59b8e');

const strip = document.getElementById('map-strip').getContext('2d');
strip.fillStyle = '#0010e8';
strip.fillRect(363, 0, 30, 3);

const m = document.getElementById('map-bottom').getContext('2d');
park(m, [[22, 4], [40, 0], [60, 15], [42, 34], [30, 30], [16, 16]], '#6f7a5a', 12);
park(m, [[59, 36], [66, 27], [82, 36], [92, 60], [72, 68], [52, 54]], '#9a9580', 4);
park(m, [[63, 67], [84, 48], [103, 62], [125, 62], [120, 78], [116, 106], [97, 118], [84, 86]], '#465c40', 60);
park(m, [[121, 110], [168, 145], [93, 158], [107, 129]], '#62745a', 16);
park(m, [[146, 90], [168, 86], [188, 116], [186, 136], [160, 122]], '#6d7459', 18);
park(m, [[60, 178], [98, 174], [108, 209], [56, 209]], '#44563c', 50);
park(m, [[36, 148], [60, 142], [74, 158], [58, 170], [40, 164]], '#97957a', 6);
park(m, [[132, 84], [146, 78], [156, 92], [142, 100]], '#a9ada4', 1);
park(m, [[53, 30], [62, 26], [66, 36], [78, 36], [86, 50], [72, 58]], '#b2aea8', 0);
for (let i = 0; i < 75; i++) {
  const t = rnd();
  m.fillStyle = pick(greens);
  m.beginPath();
  m.arc(103 + t * 85 + rnd() * 8, t * 105 + rnd() * 6, 1 + rnd() * 2.4, 0, 7);
  m.fill();
}
const road = '#cbb7a6';
line(m, [[91, 0], [120, 35], [150, 70], [188, 118]], 4, road);
line(m, [[112, 0], [150, 48], [188, 90]], 3, '#a69c90');
line(m, [[86, 0], [62, 16], [36, 37], [8, 60]], 5, road);
line(m, [[6, 0], [36, 37], [66, 76], [97, 114]], 4, road);
line(m, [[10, 60], [34, 100], [78, 154]], 4, road);
line(m, [[60, 14], [100, 62], [128, 90]], 3.500, road);
line(m, [[140, 60], [142, 70], [130, 88], [104, 122], [84, 156], [46, 210]], 5, road);
line(m, [[128, 94], [150, 122], [169, 143]], 3.500, road);
line(m, [[0, 182], [40, 174], [90, 159], [188, 142]], 5, road);
line(m, [[0, 116], [22, 140], [42, 170]], 4, road);
line(m, [[0, 180], [26, 210]], 5, '#b89c92');
line(m, [[188, 160], [160, 190], [140, 210]], 9, '#968e86');
line(m, [[188, 158], [158, 188], [136, 210]], 1.500, '#6b645e');
park(m, [[172, 130], [182, 126], [186, 136], [174, 142]], '#ee8e62', 0);
park(m, [[157, 46], [184, 28], [186, 31], [161, 50]], '#e6e2de', 0);
m.fillStyle = '#001cff';
m.strokeStyle = '#dfe6ff';
for (const tri of [[[0, 54], [10, 59], [0, 72]], [[0, 103], [8, 114], [0, 117]]]) {
  m.beginPath();
  tri.forEach((p, i) => i ? m.lineTo(...p) : m.moveTo(...p));
  m.closePath();
  m.fill();
  m.stroke();
}
```
